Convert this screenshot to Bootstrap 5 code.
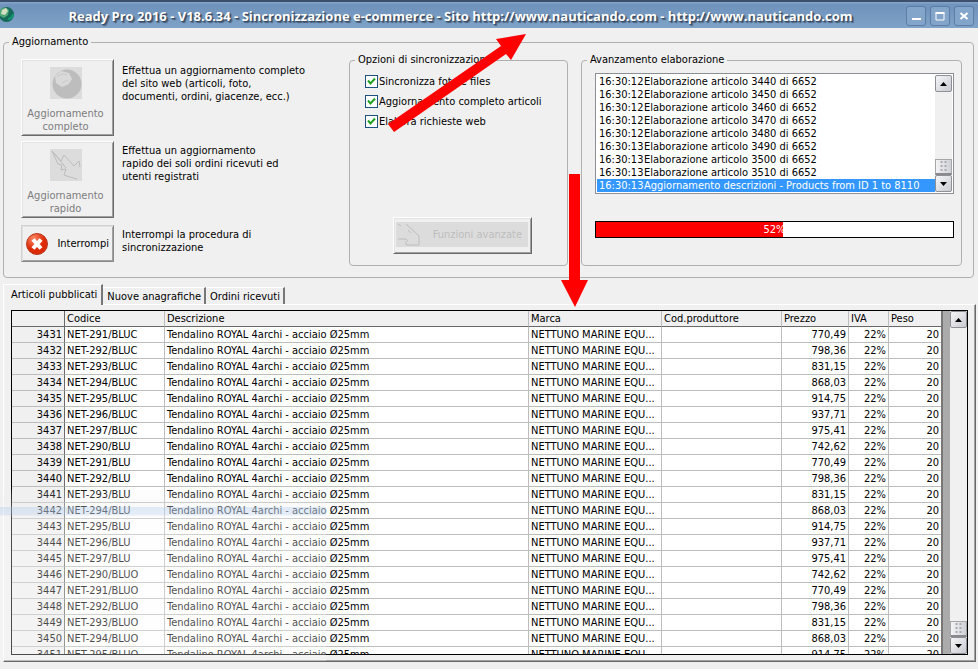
<!DOCTYPE html>
<html lang="it">
<head>
<meta charset="utf-8">
<meta name="viewport" content="width=device-width, initial-scale=1">
<title>Ready Pro 2016 - Sincronizzazione e-commerce</title>
<link href="https://cdn.jsdelivr.net/npm/bootstrap@5.3.0/dist/css/bootstrap.min.css" rel="stylesheet">
<style>
body{font-family:"DejaVu Sans Condensed",Roboto,sans-serif;font-size:11px;line-height:13px;color:#000;background:#f0f0f0}
.titlebar{height:28px;padding:0 4px 0 0;border-top:2px solid #3c4f6c;background:linear-gradient(#86a6cc,#6e92bb 3px,#7fa3c7)}
.app-title{font-family:"Open Sans","Noto Sans",sans-serif;font-size:13px;line-height:16px;font-weight:700;color:#fff;text-shadow:1px 1px 1px #33455e,2px 2px 1px #4a607c;white-space:nowrap;padding-top:6px}
.win-btn{width:20px;height:20px;padding:0;border:1px solid #5b7da6;border-radius:3px;background:#84a5ca;display:grid;place-items:center}
.group{border:1px solid #b0b0b0;border-radius:4px}
.group>legend{float:none;width:auto;margin:0 0 0 5px;padding:0 3px;font-size:11px;line-height:14px;height:14px}
.outer{margin:7px 4px 0 3px}
.outer-in{padding:4px 11px 11px 17px}
.actions{width:328px;padding:6px 0 4px;row-gap:5px}
.options{width:219px}
.raised{font-size:11px;line-height:13px;padding:0;background:#f0f0f0;color:#000;border:1px solid;border-color:#fff #6a6a6a #6a6a6a #fff;box-shadow:inset 1px 1px #e2e2e2,inset -1px -1px #a0a0a0}
.raised:disabled{color:#7d7d7d}
.act{width:93px;flex:none}
.tall{height:77px;padding:4px 4px 0 0}
.stop{height:37px;margin-top:2px;border-color:#d0d0d4 #8a8a8a #8a8a8a #d0d0d4}
.act-text{width:210px;margin:0;padding:5px 0 0 8px}
.quick{padding-top:3px}
.tick{appearance:none;width:13px;height:13px;margin:0;border:1px solid #1c5180;background:#fff url("data:image/svg+xml,%3Csvg xmlns='http://www.w3.org/2000/svg' viewBox='0 0 11 11'%3E%3Cpath d='M2 4.5l2.5 3L9 2.5' fill='none' stroke='%2321a121' stroke-width='2'/%3E%3C/svg%3E")}
.opts-list{padding:8px 0 0 15px;row-gap:7px}
.opts-list label{padding-left:1px}
.adv{width:139px;height:37px;margin:0 0 11px 43px;padding:4px 3px 6px 2px}
.adv-in{height:25px;background:#dcdcdc;color:#bdbdbd;padding-right:6px}
.progress-side{margin-left:13px}
.log{margin:6px 7px 0 13px;border:1px solid #8c9096;background:#fff;padding:1px}
.log ul{flex:1;min-width:0}
.log li{height:13px;line-height:14px;padding-left:2px;white-space:nowrap;overflow:hidden}
.log time{display:inline-block;width:45px}
.log .sel{background:#3397fd;color:#fff}
.sb{width:17px;background:#f0f0f0;flex:none}
.sb-btn{height:17px;width:17px;padding:0;border:1px solid #8f9095;border-radius:2px;background:linear-gradient(135deg,#f6f6f8,#c9cad2);display:grid;place-items:center}
.sb-thumb{height:16px;border:1px solid #a5a6aa;border-bottom:2px solid #8a8a8e;background:linear-gradient(90deg,#f4f4f6,#cfd0d6)}
.meter{height:17px;margin:27px 7px 0 13px;border:1px solid #000;border-radius:0;background:#fff;font-size:11px}
.meter>div{background:#f00;height:100%}
.meter>span{position:absolute;inset:0;text-align:center;color:#fff;line-height:16px}
.tabs{margin:5px 0 0 3px;height:21px}
.tab{font-size:11px;line-height:13px;border:0;border-top:1px solid #fff;border-right:2px solid #777;background:#f0f0f0;padding:2px 3px 2px 4px;height:17px;white-space:nowrap;color:#000}
.tab.on{height:21px;padding:2px 4px 3px 7px;border-left:1px solid #fff;margin-bottom:-1px;z-index:1}
.panel{flex:1;min-height:0;margin:0 2px 7px 3px;padding:5px 7px 6px 7px;border:1px solid;border-color:#fff #696969 #696969 #fff;box-shadow:inset -1px -1px #a0a0a0}
.gridbox{height:100%;border:1px solid #000;background:#ababab;overflow:hidden}
.grid-wrap{flex:1;min-width:0;overflow:hidden;margin-right:7px;border-right:2px solid #777}
.items{width:100%;table-layout:fixed;border-collapse:separate;border-spacing:0;background:#fff}
.items th,.items td{height:16px;padding:0 2px;font-weight:400;white-space:nowrap;overflow:hidden;border-right:1px solid #bdbdbd;border-bottom:1px solid #bdbdbd;line-height:15px}
.items thead th{background:#f0f0f0;border-bottom:1px solid #696969}
.items tbody th{background:#f0f0f0;text-align:right}
.items tr>:first-child{border-right:1px solid #696969}
.items tr>:nth-child(n+6){text-align:right}
.items thead tr>:nth-child(n){text-align:left}
.items tr>:last-child{border-right:0}
.ghost{position:absolute;left:0;bottom:8px;width:326px;top:490px;pointer-events:none;background:linear-gradient(rgba(240,240,240,.1),rgba(240,240,240,.35) 17px,rgba(195,215,240,.55) 17px,rgba(205,220,240,.5) 25px,rgba(250,250,250,.3) 26px)}
.marks{position:absolute;left:0;top:0;pointer-events:none}
</style>
<script src="https://cdn.jsdelivr.net/npm/bootstrap@5.3.0/dist/js/bootstrap.bundle.min.js"></script>
</head>
<body class="d-flex flex-column vh-100 overflow-hidden position-relative">
<header class="titlebar d-flex align-items-start flex-shrink-0">
  <svg width="15" height="20" viewBox="0 0 15 20" class="flex-shrink-0"><circle cx="6.500" cy="12.500" r="7.500" fill="#17695a"/><path d="M0 8q5-5 9 0l-1 5-4 3-4-2z" fill="#4fa777"/><path d="M2 8l4-2 2 3-3 4-4-1z" fill="#d5dfc0"/><path d="M8 17q4 0 5-5" stroke="#0d9a70" stroke-width="2" fill="none"/></svg>
  <h1 class="app-title flex-grow-1 text-center mb-0">Ready Pro 2016 - V18.6.34 - Sincronizzazione e-commerce - Sito http://www.nauticando.com - http://www.nauticando.com</h1>
  <div class="d-flex gap-1 pt-1">
    <button class="win-btn" aria-label="Riduci"><svg width="12" height="12"><path d="M2 9h9" stroke="#fff" stroke-width="2"/></svg></button>
    <button class="win-btn" aria-label="Ingrandisci"><svg width="12" height="12"><path d="M2 3h8v7H2z" fill="none" stroke="#fff"/><path d="M1.500 3h9" stroke="#fff" stroke-width="2"/></svg></button>
    <button class="win-btn" aria-label="Chiudi"><svg width="12" height="12"><path d="M2.500 3l7 6M9.500 3l-7 6" stroke="#fff" stroke-width="2"/></svg></button>
  </div>
</header>

<fieldset class="group outer flex-shrink-0">
  <legend>Aggiornamento</legend>
  <div class="outer-in d-flex">
    <div class="actions d-flex flex-column flex-shrink-0">
      <div class="d-flex">
        <button class="raised act tall" disabled><svg class="d-block mx-auto mb-2" width="32" height="32"><path fill="#dcdcdc" d="M0 0h32v32H0z"/><circle cx="17" cy="17" r="14.500" fill="#bdbdbd"/><path d="M5 9l6-5 8 2 3 6-3 5-7 3-6-4z" fill="#d9d9d9"/><path d="M7 10q5-5 10-2M12 16l6-3" stroke="#c8c8c8" fill="none"/></svg>Aggiornamento<br>completo</button>
        <p class="act-text">Effettua un aggiornamento completo<br>del sito web (articoli, foto,<br>documenti, ordini, giacenze, ecc.)</p>
      </div>
      <div class="d-flex">
        <button class="raised act tall" disabled><svg class="d-block mx-auto mb-2" width="32" height="32"><path fill="#dcdcdc" d="M0 0h32v32H0z"/><path d="M2 2l9 10 3-6 10 11 5-5 1 6M2 2l6 13 4 1-1 5 5-1-2 6 6 2 7 2M3 3l13 16" fill="none" stroke="#bcbcbc"/></svg>Aggiornamento<br>rapido</button>
        <p class="act-text quick">Effettua un aggiornamento<br>rapido dei soli ordini ricevuti ed<br>utenti registrati</p>
      </div>
      <div class="d-flex">
        <button class="raised act stop d-flex align-items-center justify-content-between px-1"><svg width="22" height="22" viewBox="0 0 22 22"><defs><radialGradient id="r" cx=".35" cy=".25"><stop offset="0" stop-color="#ff8a68"/><stop offset="1" stop-color="#dc2a06"/></radialGradient></defs><circle cx="11" cy="11" r="10.500" fill="url(#r)" stroke="#b83a20"/><path d="M7 6.500l8 9M15 6.500l-8 9" stroke="#fff" stroke-width="4"/></svg><span>Interrompi</span></button>
        <p class="act-text">Interrompi la procedura di<br>sincronizzazione</p>
      </div>
    </div>
    <fieldset class="group options d-flex flex-column flex-shrink-0">
      <legend>Opzioni di sincronizzazione</legend>
      <div class="d-flex flex-column h-100">
        <div class="opts-list d-flex flex-column">
          <div class="d-flex"><input class="tick" type="checkbox" id="o1" checked><label for="o1">Sincronizza foto e files</label></div>
          <div class="d-flex"><input class="tick" type="checkbox" id="o2" checked><label for="o2">Aggiornamento completo articoli</label></div>
          <div class="d-flex"><input class="tick" type="checkbox" id="o3" checked><label for="o3">Elabora richieste web</label></div>
        </div>
        <button class="raised adv mt-auto" disabled><span class="adv-in d-flex align-items-center justify-content-between"><svg width="26" height="25"><path d="M2 2l3 2M10 2l13 12v9H10v-4M2 17h8l2 2M12 8l3 3" fill="none" stroke="#bdbdbd"/></svg>Funzioni avanzate</span></button>
      </div>
    </fieldset>
    <fieldset class="group progress-side flex-grow-1">
      <legend>Avanzamento elaborazione</legend>
      <div class="log d-flex">
        <ul class="list-unstyled mb-0" id="log"></ul>
        <div class="sb d-flex flex-column">
          <button class="sb-btn" aria-label="Su"><svg width="7" height="4"><path d="M0 4l3.500-4L7 4z"/></svg></button>
          <div class="sb-thumb mt-auto"><svg class="d-block mx-auto" width="8" height="12"><path d="M1.500 1v11M5.500 1v11" stroke="#a9aab0" stroke-width="2" stroke-dasharray="2 2"/></svg></div>
          <button class="sb-btn" aria-label="Giù"><svg width="7" height="4"><path d="M0 0h7L3.500 4z"/></svg></button>
        </div>
      </div>
      <div class="meter progress position-relative" role="progressbar" aria-valuenow="52" aria-valuemin="0" aria-valuemax="100"><div id="bar"></div><span>52%</span></div>
    </fieldset>
  </div>
</fieldset>

<nav class="tabs d-flex align-items-end flex-shrink-0">
  <button class="tab on position-relative">Articoli pubblicati</button>
  <button class="tab">Nuove anagrafiche</button>
  <button class="tab">Ordini ricevuti</button>
</nav>
<main class="panel">
  <div class="gridbox d-flex">
    <div class="grid-wrap">
      <table class="items">
        <colgroup><col style="width:53px"><col style="width:100px"><col><col style="width:133px"><col style="width:120px"><col style="width:67px"><col style="width:40px"><col style="width:52px"></colgroup>
        <thead><tr><th></th><th>Codice</th><th>Descrizione</th><th>Marca</th><th>Cod.produttore</th><th>Prezzo</th><th>IVA</th><th>Peso</th></tr></thead>
        <tbody id="rows"></tbody>
      </table>
    </div>
    <div class="sb d-flex flex-column">
      <button class="sb-btn" aria-label="Su"><svg width="7" height="4"><path d="M0 4l3.500-4L7 4z"/></svg></button>
      <div class="sb-thumb mt-auto"><svg class="d-block mx-auto" width="8" height="12"><path d="M1.500 1v11M5.500 1v11" stroke="#a9aab0" stroke-width="2" stroke-dasharray="2 2"/></svg></div>
      <button class="sb-btn" aria-label="Giù"><svg width="7" height="4"><path d="M0 0h7L3.500 4z"/></svg></button>
    </div>
  </div>
</main>
<div class="ghost"></div>
<svg class="marks" width="600" height="320" aria-hidden="true"><path fill="red" d="M388 124L501 46 496 39 526 34 511 60 506 54 394 132zM569 174h11v106h8l-13 27-14-27h8z"/></svg>
<script>
const log = [[12,3440],[12,3450],[12,3460],[12,3470],[12,3480],[13,3490],[13,3500],[13,3510]];
document.getElementById('log').innerHTML = log.map(([s,n]) =>
  `<li><time>16:30:${s}</time>Elaborazione articolo ${n} di 6652</li>`).join('') +
  '<li class="sel"><time>16:30:13</time>Aggiornamento descrizioni - Products from ID 1 to 8110</li>';
document.getElementById('bar').style.width = '52.5%';
const prices = ['742,62','770,49','798,36','831,15','868,03','914,75','937,71','975,41'];
let html = '';
for (let n = 3431; n <= 3451; n++) {
  const k = (n - 3430) % 8;
  const colour = n < 3438 ? 'BLUC' : n < 3446 ? 'BLU' : 'BLUO';
  html += `<tr><th scope="row">${n}</th><td>NET-29${k}/${colour}</td><td>Tendalino ROYAL 4archi - acciaio Ø25mm</td><td>NETTUNO MARINE EQU...</td><td></td><td>${prices[k]}</td><td>22%</td><td>20</td></tr>`;
}
document.getElementById('rows').innerHTML = html;
</script>
</body>
</html>
